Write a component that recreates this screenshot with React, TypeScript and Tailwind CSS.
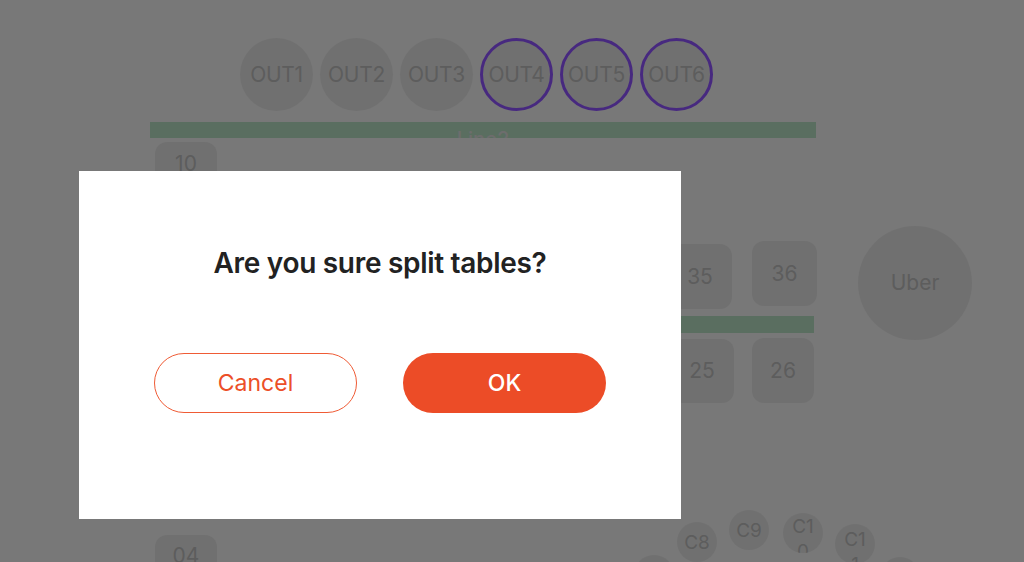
import React from 'react'

const font = { fontFamily: 'Inter, "Noto Sans", sans-serif' }

const outs = ['OUT1', 'OUT2', 'OUT3', 'OUT4', 'OUT5', 'OUT6']

// tables on the floor plan: position is the content here
const tiles = [
  { label: '10', cls: 'left-[155px] top-[142px] w-[62px] h-[64px] items-start pt-[10px]' },
  { label: '35', cls: 'left-[668px] top-[244px] w-[64px] h-[65px] items-center' },
  { label: '36', cls: 'left-[752px] top-[241px] w-[65px] h-[65px] items-center' },
  { label: '25', cls: 'left-[670px] top-[339px] w-[64px] h-[64px] items-center' },
  { label: '26', cls: 'left-[752px] top-[338px] w-[62px] h-[65px] items-center' },
  { label: '04', cls: 'left-[155px] top-[535px] w-[62px] h-[64px] items-start pt-[9px]' },
]

const dots = [
  { label: 'C8', cls: 'left-[677px] top-[522px] items-center' },
  { label: 'C9', cls: 'left-[729px] top-[510px] items-center' },
  { label: 'C10', cls: 'left-[783px] top-[513px] items-start pt-[1px]' },
  { label: 'C11', cls: 'left-[835px] top-[524px] items-start pt-[3px]' },
  { label: '', cls: 'left-[634px] top-[555px] items-center' },
  { label: '', cls: 'left-[880px] top-[557px] items-center' },
]

const App = () => {
  return (
    <div style={font} className="relative w-[1024px] h-[562px] overflow-hidden bg-[#f0f0f0]">
      {/* floor plan */}
      <div className="pt-[38px] pl-[240px] flex gap-[7px]">
        {outs.map((o, i) => (
          <div
            key={o}
            className={
              i < 3
                ? 'w-[73px] h-[73px] rounded-full bg-[#e1e1e1] flex items-center justify-center text-[21px] tracking-[-0.3px] text-[#bababa]'
                : 'w-[73px] h-[73px] rounded-full bg-[#e1e1e1] border-[3px] border-[#8f52ff] flex items-center justify-center text-[21px] tracking-[-0.3px] text-[#bababa]'
            }
          >
            {o}
          </div>
        ))}
      </div>

      <div className="mt-[11px] ml-[150px] w-[666px] h-[16px] bg-[#b5dcc1] overflow-hidden flex justify-center">
        <span className="text-[20px] leading-[20px] pt-[7px] text-[#dadada] font-medium">Line2</span>
      </div>

      <div className="mt-[178px] ml-[150px] w-[664px] h-[17px] bg-[#b5dcc1]" />

      {tiles.map(t => (
        <div
          key={t.label}
          className={`absolute ${t.cls} rounded-[12px] bg-[#e1e1e1] flex justify-center text-[21px] text-[#bababa]`}
        >
          <span className="leading-[24px]">{t.label}</span>
        </div>
      ))}

      <div className="absolute left-[858px] top-[226px] w-[114px] h-[114px] rounded-full bg-[#e1e1e1] flex items-center justify-center text-[21px] text-[#bababa]">
        Uber
      </div>

      {dots.map((d, i) => (
        <div
          key={i}
          className={`absolute ${d.cls} w-[40px] h-[40px] rounded-full bg-[#e1e1e1] overflow-hidden flex justify-center px-[6px] text-[19px] leading-[25px] text-[#bababa] break-all text-center`}
        >
          {d.label}
        </div>
      ))}

      {/* dim overlay + confirm dialog */}
      <div className="absolute inset-0 bg-black/50">
        <div className="absolute left-[79px] top-[171px] w-[602px] h-[348px] bg-white flex flex-col items-center">
          <h2 className="mt-[75px] text-[28px] leading-[34px] font-semibold text-[#222222] tracking-[-0.3px]">
            Are you sure split tables?
          </h2>
          <div className="mt-[73px] w-full px-[75px] flex justify-between">
            <button className="w-[203px] h-[60px] rounded-full border-[1.5px] border-[#ef5b35] text-[#ec4f28] text-[23px] bg-white">
              Cancel
            </button>
            <button className="w-[203px] h-[60px] rounded-full bg-[#ec4c27] text-white text-[23px] font-medium">
              OK
            </button>
          </div>
        </div>
      </div>
    </div>
  )
}

export default App
